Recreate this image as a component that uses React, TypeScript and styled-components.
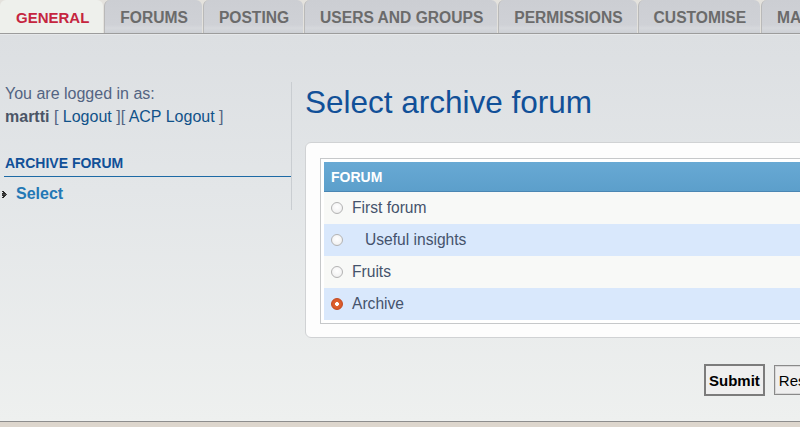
import React from "react";
import styled, { createGlobalStyle } from "styled-components";

const Global = createGlobalStyle`
  html, body { margin: 0; padding: 0; }
  body { font-family: "Liberation Sans", Arial, sans-serif; background: #ddd6cd; }
`;

const Page = styled.div`
  width: 800px;
  height: 427px;
  overflow: hidden;
  display: flex;
  flex-direction: column;
  background: #ddd6cd;
`;

const TabBar = styled.nav`
  flex: 0 0 auto;
  height: 33px;
  display: flex;
  align-items: stretch;
  white-space: nowrap;
  background: #e4e2dd;
  border-bottom: 1px solid #9c9c9c;
`;

const Tab = styled.a<{ $active?: boolean }>`
  flex: 0 0 auto;
  display: flex;
  align-items: center;
  padding: 2px 14px 0 15px;
  margin-right: 1px;
  border-left: 1px solid ${(p) => (p.$active ? "transparent" : "#b9b9b9")};
  border-radius: 6px 6px 0 0;
  font-size: ${(p) => (p.$active ? "15px" : "15.6px")};
  font-weight: bold;
  text-decoration: none;
  color: ${(p) => (p.$active ? "#c5253f" : "#6b6b6b")};
  background: ${(p) =>
    p.$active
      ? "#eef0ec"
      : "linear-gradient(to bottom, #ccced3 0%, #cfd1d6 75%, #d6d8dc 85%, #cdd0d5 100%)"};
`;

const Content = styled.div`
  flex: 0 0 388px;
  display: flex;
  align-items: flex-start;
  padding-top: 47px;
  box-sizing: border-box;
  border-top: 1px solid #e6e8ea;
  border-bottom: 1px solid #8d8d8d;
  background: linear-gradient(to bottom, #dcdfe2 0%, #e3e6e8 40%, #eef0ef 100%);
`;

const Sidebar = styled.aside`
  flex: 0 0 287px;
  height: 128px;
  padding-left: 4px;
  border-right: 1px solid #c9cdd1;
  font-size: 16px;
  line-height: 23px;
  color: #536482;
`;

const LoginLine = styled.div`
  padding-left: 1px;
`;

const UserName = styled.strong`
  color: #4b5566;
`;

const Link = styled.a`
  color: #105289;
  text-decoration: none;
`;

const MenuHeading = styled.h3`
  margin: 26px 0 0 0;
  padding: 0 0 4px 1px;
  font-size: 14px;
  line-height: 18px;
  font-weight: bold;
  color: #115098;
  border-bottom: 1px solid #1d6aa5;
`;

const MenuItem = styled.a`
  display: flex;
  align-items: center;
  gap: 8px;
  margin: 6px 0 0 -2px;
  font-size: 16px;
  font-weight: bold;
  line-height: 22px;
  color: #2378b5;
  text-decoration: none;
`;

const Main = styled.main`
  flex: 0 0 917px;
  margin-left: 13px;
`;

const Title = styled.h1`
  margin: 1px 0 0 0;
  font-size: 31.5px;
  line-height: 38px;
  font-weight: normal;
  color: #115098;
`;

const Panel = styled.div`
  margin-top: 21px;
  padding: 15px 15px 13px 14px;
  background: #fdfdfd;
  border: 1px solid #d0d2d4;
  border-radius: 6px;
`;

const Table = styled.div`
  border: 1px solid #c6c8ca;
  padding: 3px;
  background: #fff;
`;

const HeadCell = styled.div`
  height: 29px;
  display: flex;
  align-items: center;
  padding-left: 7px;
  font-size: 14px;
  font-weight: bold;
  color: #fff;
  background: linear-gradient(to bottom, #68a9d4 0%, #5c9fcb 100%);
  border-bottom: 1px solid #4a86b3;
`;

const Row = styled.label<{ $alt?: boolean }>`
  height: 32px;
  display: flex;
  align-items: center;
  gap: 9px;
  padding-left: 7px;
  font-size: 15.6px;
  color: #45536c;
  background: ${(p) => (p.$alt ? "#d9e8fc" : "#f8f9f7")};
`;

const RowText = styled.span<{ $indent?: boolean }>`
  padding-left: ${(p) => (p.$indent ? "13px" : "0")};
`;

const Radio = styled.input`
  appearance: none;
  margin: 0;
  width: 12px;
  height: 12px;
  border-radius: 50%;
  border: 1px solid #b3b3b3;
  background: radial-gradient(circle at 50% 40%, #ffffff 0%, #f4f4f4 60%, #e4e4e4 100%);
  box-sizing: border-box;
  flex: 0 0 auto;
  &:checked {
    border: 1px solid #c4491f;
    background: radial-gradient(circle, #ffffff 0 1.7px, #e0612f 2.2px, #cf5226 100%);
  }
`;

const Buttons = styled.div`
  margin-top: 26px;
  display: flex;
  justify-content: center;
  gap: 9px;
`;

const Button = styled.button<{ $primary?: boolean }>`
  height: ${(p) => (p.$primary ? "32px" : "30px")};
  margin-top: ${(p) => (p.$primary ? "0" : "1px")};
  padding: 0 ${(p) => (p.$primary ? "3px" : "4px")};
  font-family: "Liberation Sans", Arial, sans-serif;
  font-size: 15px;
  font-weight: ${(p) => (p.$primary ? "bold" : "normal")};
  color: #000;
  background: #efefef;
  border: ${(p) => (p.$primary ? "2px solid #7c7c7c" : "1px solid #8a8a8a")};
  box-shadow: ${(p) => (p.$primary ? "none" : "inset 0 0 0 1px #d8d8d8")};
  border-radius: 0;
`;

const Bullet = () => (
  <svg width="6" height="7" viewBox="0 0 6 7" aria-hidden="true">
    <g fill="#2b2b2b">
      <rect x="0" y="0" width="2" height="1" />
      <rect x="1" y="1" width="2" height="1" />
      <rect x="0" y="2" width="4" height="1" />
      <rect x="0" y="3" width="5" height="1" opacity="0.85" />
      <rect x="0" y="4" width="4" height="1" />
      <rect x="1" y="5" width="2" height="1" />
      <rect x="0" y="6" width="2" height="1" />
    </g>
  </svg>
);

const tabs = ["GENERAL", "FORUMS", "POSTING", "USERS AND GROUPS", "PERMISSIONS", "CUSTOMISE", "MAINTENANCE", "SYSTEM"];

const forums = [
  { name: "First forum", indent: false },
  { name: "Useful insights", indent: true },
  { name: "Fruits", indent: false },
  { name: "Archive", indent: false },
];

export default function App() {
  return (
    <Page>
      <Global />
      <TabBar>
        {tabs.map((t, i) => (
          <Tab key={t} $active={i === 0} href="#">
            {t}
          </Tab>
        ))}
      </TabBar>
      <Content>
        <Sidebar>
          <LoginLine>You are logged in as:</LoginLine>
          <LoginLine>
            <UserName>martti</UserName> [ <Link href="#">Logout</Link> ][ <Link href="#">ACP Logout</Link> ]
          </LoginLine>
          <MenuHeading>ARCHIVE FORUM</MenuHeading>
          <MenuItem href="#">
            <Bullet />
            Select
          </MenuItem>
        </Sidebar>
        <Main>
          <Title>Select archive forum</Title>
          <Panel>
            <Table>
              <HeadCell>FORUM</HeadCell>
              {forums.map((f, i) => (
                <Row key={f.name} $alt={i % 2 === 1}>
                  <Radio type="radio" name="forum" defaultChecked={f.name === "Archive"} />
                  <RowText $indent={f.indent}>{f.name}</RowText>
                </Row>
              ))}
            </Table>
          </Panel>
          <Buttons>
            <Button $primary>Submit</Button>
            <Button>Reset</Button>
          </Buttons>
        </Main>
      </Content>
    </Page>
  );
}
